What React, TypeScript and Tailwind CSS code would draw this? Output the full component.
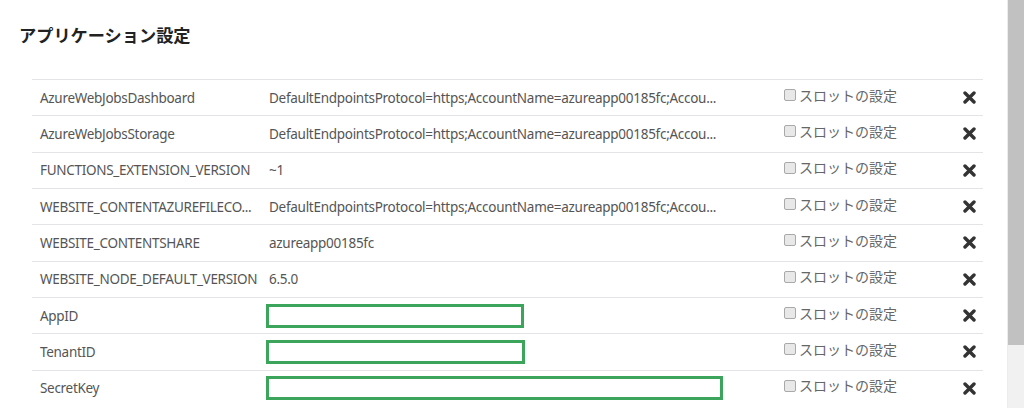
import React from "react";

const rows: { k: string; v?: string; box?: number }[] = [
  { k: "AzureWebJobsDashboard", v: "DefaultEndpointsProtocol=https;AccountName=azureapp00185fc;Accou..." },
  { k: "AzureWebJobsStorage", v: "DefaultEndpointsProtocol=https;AccountName=azureapp00185fc;Accou..." },
  { k: "FUNCTIONS_EXTENSION_VERSION", v: "~1" },
  { k: "WEBSITE_CONTENTAZUREFILECO...", v: "DefaultEndpointsProtocol=https;AccountName=azureapp00185fc;Accou..." },
  { k: "WEBSITE_CONTENTSHARE", v: "azureapp00185fc" },
  { k: "WEBSITE_NODE_DEFAULT_VERSION", v: "6.5.0" },
  { k: "AppID", box: 258 },
  { k: "TenantID", box: 259 },
  { k: "SecretKey", box: 457 },
];

function XIcon() {
  return (
    <svg width="13" height="13" viewBox="0 0 13 13">
      <path d="M2 2 L11 11 M11 2 L2 11" stroke="#333" strokeWidth="3.4" strokeLinecap="round" />
    </svg>
  );
}

export default function App() {
  return (
    <div
      className="flex w-[1024px] h-[408px] overflow-hidden bg-white"
      style={{ fontFamily: '"Noto Sans", "Noto Sans CJK JP", sans-serif' }}
    >
      <div className="flex-1 flex flex-col">
        <div className="pl-[19px] pt-[23px] h-[79px]">
          <h1
            className="text-[17.2px] font-bold text-[#222] leading-[24px]"
            style={{ fontFamily: '"Noto Sans CJK JP", sans-serif' }}
          >
            アプリケーション設定
          </h1>
        </div>
        <div className="ml-[32px] mr-[24px] flex flex-col">
          {rows.map((r, i) => (
            <div
              key={i}
              className="flex items-center h-[36.33px] border-t border-[#e3e4e8] text-[13.5px] text-[#555]"
            >
              <div className="w-[237px] pl-[8px] whitespace-nowrap tracking-[-0.3px]">{r.k}</div>
              <div className="w-[515px] whitespace-nowrap tracking-[-0.28px] flex items-center">
                {r.box ? (
                  <div
                    className="h-[24px] border-[3px] border-[#3ba55c] -ml-[3px]"
                    style={{ width: r.box }}
                  />
                ) : (
                  r.v
                )}
              </div>
              <div
                className="flex items-center gap-[3px] w-[179px] -mt-[5px] text-[14px] text-[#666]"
                style={{ fontFamily: '"Noto Sans CJK JP", sans-serif' }}
              >
                <span className="w-[12px] h-[12px] border border-[#a9a9a9] rounded-[2px] bg-[#e8e8e8]" />
                <span>スロットの設定</span>
              </div>
              <div className="flex items-center">
                <XIcon />
              </div>
            </div>
          ))}
        </div>
      </div>
      <div className="w-[17px] h-full bg-[#f1f1f1] border-l border-[#ececec]">
        <div className="h-[345px] bg-[#c1c1c1]" />
      </div>
    </div>
  );
}
